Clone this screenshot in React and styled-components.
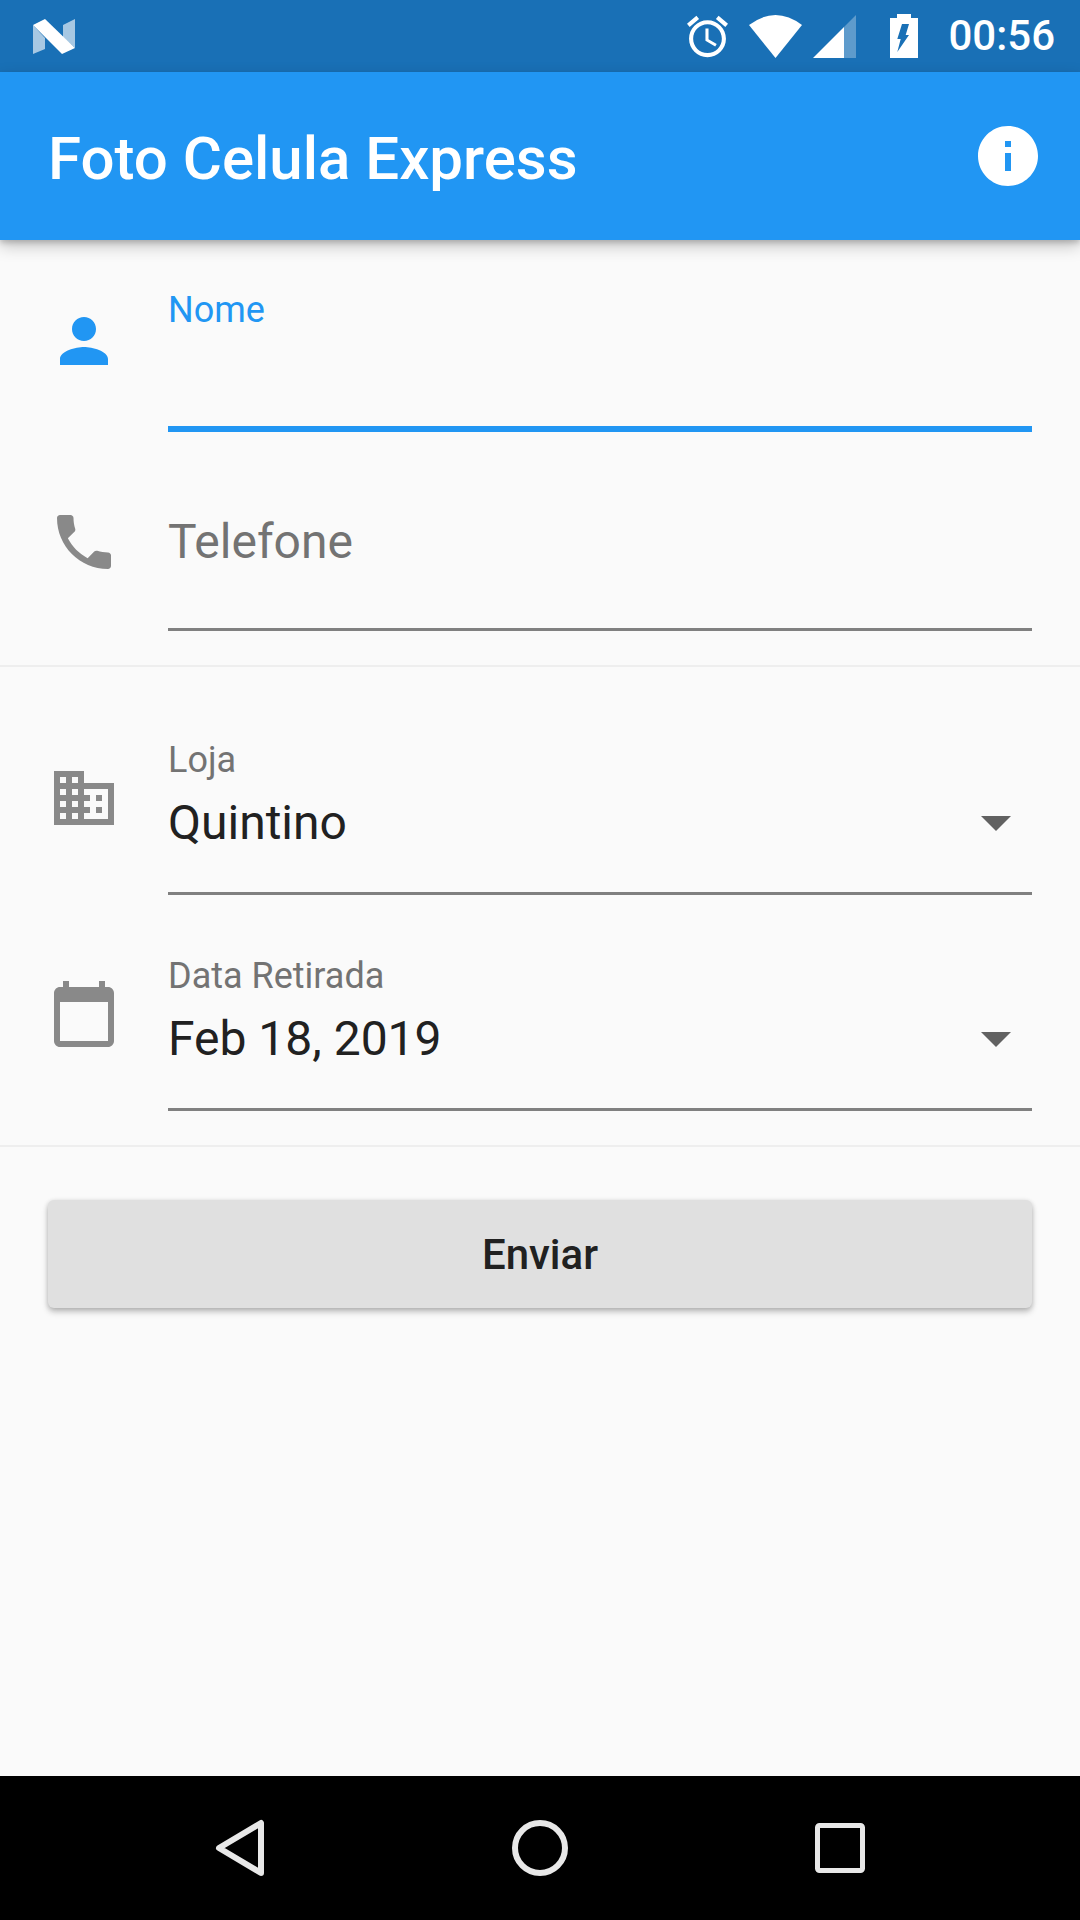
import React from 'react';
import styled, { createGlobalStyle } from 'styled-components';
import { MdPerson, MdPhone, MdBusiness, MdCalendarToday, MdInfo } from 'react-icons/md';

const GlobalStyle = createGlobalStyle`
  html, body {
    margin: 0;
    padding: 0;
    background: #fafafa;
  }
  * {
    box-sizing: border-box;
  }
`;

const Screen = styled.div`
  display: flex;
  flex-direction: column;
  width: 1080px;
  height: 1920px;
  overflow: hidden;
  background: #fafafa;
  font-family: Roboto, "Liberation Sans", sans-serif;
`;

const StatusBar = styled.div`
  display: flex;
  align-items: center;
  flex: 0 0 72px;
  padding: 0 25px 0 33px;
  background: #1970b6;
  color: #fff;
`;

const StatusIcons = styled.div`
  display: flex;
  align-items: center;
  margin-left: auto;
`;

const StatusIcon = styled.svg`
  display: block;
  flex: none;
  margin-left: ${(p) => p.$gap || 0}px;
  fill: #fff;
`;

const Clock = styled.span`
  margin-left: 30px;
  font-size: 42px;
  font-weight: 500;
  line-height: 72px;
`;

const AppBar = styled.header`
  position: relative;
  z-index: 2;
  display: flex;
  align-items: center;
  justify-content: space-between;
  flex: 0 0 168px;
  padding: 0 36px 0 48px;
  background: #2196f3;
  color: #fff;
  box-shadow: 0 6px 15px rgba(0, 0, 0, 0.22), 0 3px 5px rgba(0, 0, 0, 0.16);
`;

const Title = styled.h1`
  margin: 5px 0 0;
  font-size: 60px;
  font-weight: 500;
  line-height: 72px;
`;

const Form = styled.main`
  display: flex;
  flex-direction: column;
  flex: 1;
`;

const Section = styled.section`
  padding-bottom: 34px;
  border-bottom: 2px solid #eeeeee;
`;

const Row = styled.div`
  display: flex;
  align-items: flex-end;
  height: ${(p) => p.$height}px;
  padding-right: 48px;
`;

const IconSlot = styled.div`
  display: flex;
  justify-content: center;
  flex: 0 0 168px;
  margin-bottom: ${(p) => p.$bottom}px;
  color: ${(p) => (p.$active ? '#2196f3' : 'rgba(0, 0, 0, 0.45)')};
  svg {
    display: block;
    width: 72px;
    height: 72px;
  }
`;

const Field = styled.div`
  flex: 1;
  height: 100%;
  padding-top: ${(p) => p.$top}px;
  border-bottom: ${(p) => (p.$active ? '6px solid #2196f3' : '3px solid #808080')};
`;

const Label = styled.div`
  margin-bottom: ${(p) => p.$gap || 0}px;
  font-size: 36px;
  line-height: 42px;
  color: ${(p) => (p.$active ? '#2196f3' : '#737373')};
`;

const Hint = styled.div`
  font-size: 48px;
  line-height: 56px;
  color: #737373;
`;

const ValueRow = styled.div`
  display: flex;
  align-items: center;
  justify-content: space-between;
  padding-right: 21px;
`;

const Value = styled.span`
  font-size: 48px;
  line-height: 56px;
  color: #212121;
`;

const Caret = styled.svg`
  display: block;
  fill: #616161;
`;

const SendButton = styled.button`
  display: block;
  height: 108px;
  margin: 53px 48px 0;
  border: 0;
  border-radius: 6px;
  background: #e0e0e0;
  color: #212121;
  font-family: inherit;
  font-size: 42px;
  font-weight: 500;
  box-shadow: 0 4px 6px rgba(0, 0, 0, 0.22), 0 1px 5px rgba(0, 0, 0, 0.14);
`;

const NavBar = styled.nav`
  display: flex;
  align-items: center;
  justify-content: center;
  gap: 228px;
  flex: 0 0 144px;
  background: #000;
`;

const NavIcon = styled.svg`
  display: block;
  width: 72px;
  height: 72px;
  fill: none;
  stroke: #e8e8e8;
  stroke-width: ${(p) => p.$stroke || 6};
  stroke-linejoin: round;
`;

const DropdownCaret = () => (
  <Caret width="30" height="15" viewBox="0 0 30 15">
    <polygon points="0,0 30,0 15,15" />
  </Caret>
);

function App() {
  return (
    <Screen>
      <GlobalStyle />
      <StatusBar>
        <StatusIcon width="42" height="35" viewBox="0 0 42 35">
          <polygon points="0,6 12,0 42,29 29,35" />
          <polygon points="0,6 12,19 12,30 0,35" opacity="0.62" />
          <polygon points="30,6 42,0 42,29 30,18" opacity="0.62" />
        </StatusIcon>
        <StatusIcons>
          <StatusIcon width="41" height="43" viewBox="2 1.86 20 20.14">
            <path d="M22 5.72l-4.6-3.86-1.29 1.53 4.6 3.86L22 5.72zM7.88 3.39L6.6 1.86 2 5.71l1.29 1.53 4.59-3.85zM12.5 8H11v6l4.75 2.85.75-1.23-4-2.37V8zM12 4c-4.97 0-9 4.03-9 9s4.03 9 9 9 9-4.03 9-9-4.03-9-9-9zm0 16c-3.87 0-7-3.13-7-7s3.13-7 7-7 7 3.13 7 7-3.13 7-7 7z" />
          </StatusIcon>
          <StatusIcon $gap={21} width="53" height="43" viewBox="0 0 53 43">
            <path d="M0 10Q26.5-10 53 10L26.5 43Z" />
          </StatusIcon>
          <StatusIcon $gap={11} width="43" height="43" viewBox="0 0 43 43">
            <polygon points="0,43 31,12 31,43" />
            <polygon points="31,12 43,0 43,43 31,43" opacity="0.3" />
          </StatusIcon>
          <StatusIcon $gap={34} width="28" height="44" viewBox="0 0 28 44">
            <path
              fillRule="evenodd"
              d="M7 0h14v4h7v40H0V4h7zM12 10l-4.700 15h3.400L7.300 38 19 21h-3.300L19 10z"
            />
          </StatusIcon>
          <Clock>00:56</Clock>
        </StatusIcons>
      </StatusBar>

      <AppBar>
        <Title>Foto Celula Express</Title>
        <MdInfo size={72} />
      </AppBar>

      <Form>
        <Section>
          <Row $height={192}>
            <IconSlot $active $bottom={55}>
              <MdPerson />
            </IconSlot>
            <Field $active $top={49}>
              <Label $active>Nome</Label>
            </Field>
          </Row>
          <Row $height={199}>
            <IconSlot $bottom={53}>
              <MdPhone />
            </IconSlot>
            <Field $top={82}>
              <Hint>Telefone</Hint>
            </Field>
          </Row>
        </Section>

        <Section>
          <Row $height={228}>
            <IconSlot $bottom={61}>
              <MdBusiness />
            </IconSlot>
            <Field $top={72}>
              <Label $gap={14}>Loja</Label>
              <ValueRow>
                <Value>Quintino</Value>
                <DropdownCaret />
              </ValueRow>
            </Field>
          </Row>
          <Row $height={216}>
            <IconSlot $bottom={61}>
              <MdCalendarToday />
            </IconSlot>
            <Field $top={60}>
              <Label $gap={14}>Data Retirada</Label>
              <ValueRow>
                <Value>Feb 18, 2019</Value>
                <DropdownCaret />
              </ValueRow>
            </Field>
          </Row>
        </Section>

        <SendButton>Enviar</SendButton>
      </Form>

      <NavBar>
        <NavIcon viewBox="0 0 72 72">
          <polygon points="15,36 57,11 57,61" />
        </NavIcon>
        <NavIcon viewBox="0 0 72 72">
          <circle cx="36" cy="36" r="25" />
        </NavIcon>
        <NavIcon $stroke={5} viewBox="0 0 72 72">
          <rect x="13.5" y="13.5" width="45" height="45" rx="2" />
        </NavIcon>
      </NavBar>
    </Screen>
  );
}

export default App;
